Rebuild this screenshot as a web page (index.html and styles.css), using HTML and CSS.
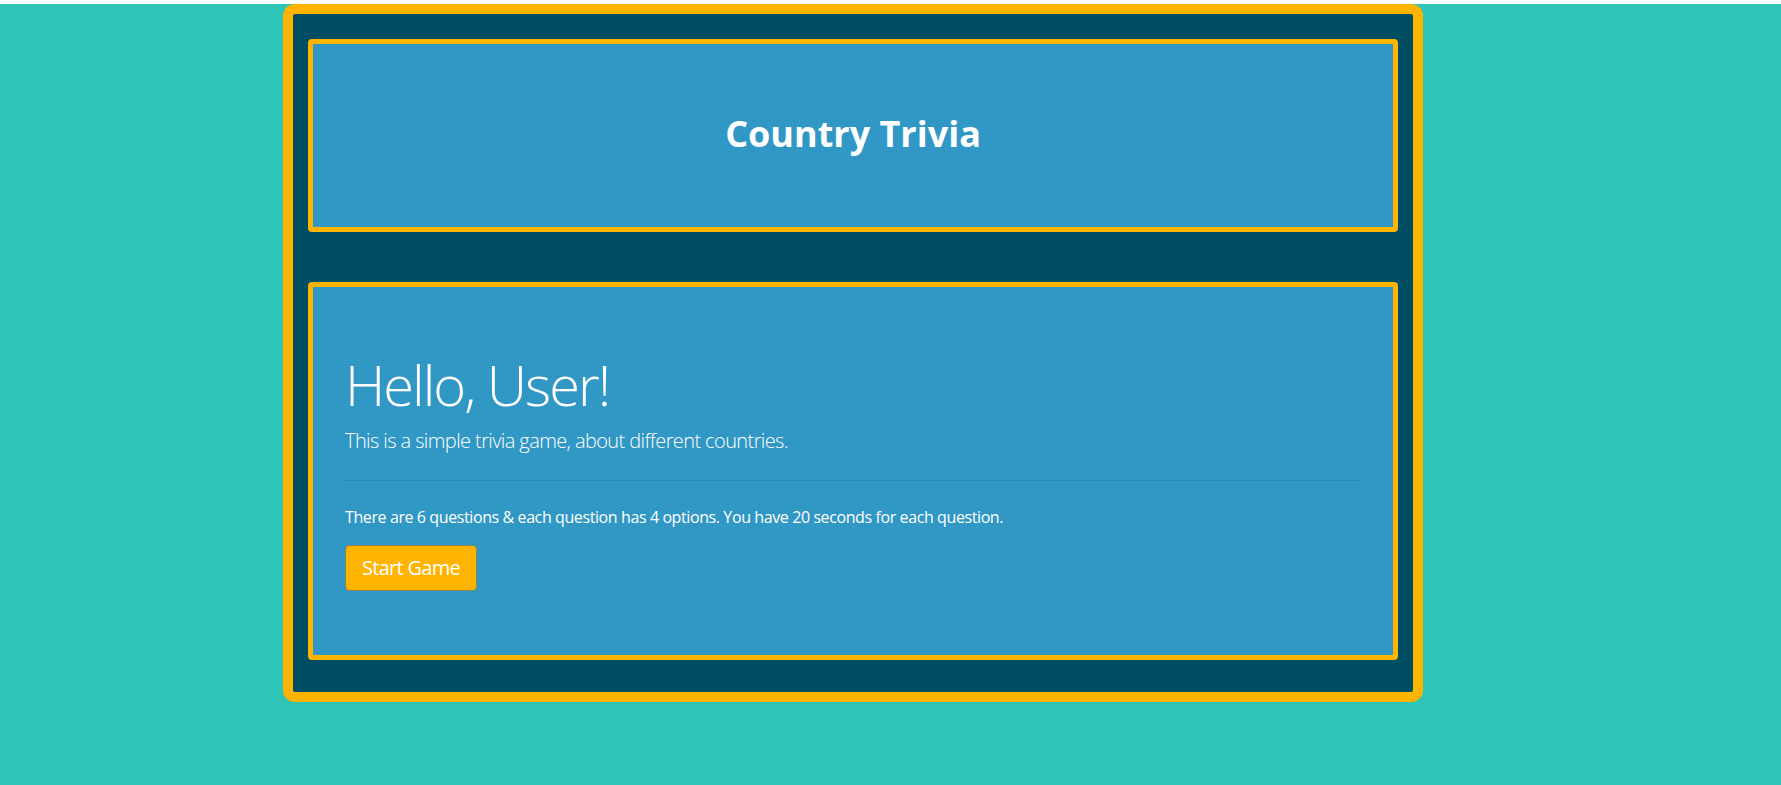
FILE: index.html
```html
<!DOCTYPE html>
<html lang="en">
<head>
<meta charset="utf-8">
<title>Country Trivia</title>
<link rel="stylesheet" href="styles.css">
</head>
<body>
<main class="frame">
  <header class="panel header">
    <h1 class="title">Country Trivia</h1>
  </header>
  <section class="panel jumbo">
    <h1 class="hello">Hello, User!</h1>
    <p class="lead">This is a simple trivia game, about different countries.</p>
    <hr class="rule">
    <p class="info">There are 6 questions &amp; each question has 4 options. You have 20 seconds for each question.</p>
    <button class="start" type="button">Start Game</button>
  </section>
</main>
</body>
</html>
```
FILE: styles.css
```css
html, body {
  margin: 0;
}
body {
  background: #2ec4b6;
  border-top: 4px solid #ffffff;
  padding-left: 283px;
  font-family: "Open Sans", "Noto Sans", sans-serif;
  color: #fff;
}
.frame {
  width: 1140px;
  box-sizing: border-box;
  border: 10px solid #ffb400;
  border-radius: 12px;
  background: #004e64;
  padding: 25px 15px 32px;
  display: flex;
  flex-direction: column;
  gap: 50px;
}
.panel {
  border: 5px solid #ffb400;
  border-radius: 4px;
  background: #3197c5;
}
.header {
  height: 193px;
  box-sizing: border-box;
  display: flex;
  align-items: center;
  justify-content: center;
}
.title {
  margin: -4px 0 0;
  font-size: 36px;
  font-weight: 700;
  line-height: 1.2;
}
.jumbo {
  padding: 64px 32px;
}
.hello {
  margin: 0 0 8px;
  font-size: 56px;
  font-weight: 300;
  line-height: 67px;
  letter-spacing: -2px;
}
.lead {
  margin: 0 0 16px;
  font-size: 20px;
  font-weight: 300;
  line-height: 30px;
  letter-spacing: -0.6px;
}
.rule {
  margin: 24px 0;
  border: 0;
  border-top: 1px solid rgba(0, 0, 0, 0.1);
}
.info {
  margin: 0 0 16px;
  font-size: 16px;
  line-height: 24px;
  letter-spacing: -0.4px;
}
.start {
  display: block;
  font-family: inherit;
  font-size: 20px;
  line-height: 28px;
  padding: 8px 16px;
  border: 1px solid #8c7f5a;
  border-radius: 4px;
  background: #ffb400;
  color: #fff;
  letter-spacing: -0.7px;
}
```
